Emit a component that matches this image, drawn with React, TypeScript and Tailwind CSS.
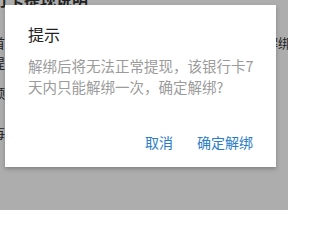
import React from 'react';

const App: React.FC = () => {
  return (
    <div className="relative w-[288px] h-[210px] overflow-hidden bg-white font-['Noto_Sans_CJK_SC',sans-serif] text-[#333]">
      {/* page behind the dialog */}
      <div className="flex flex-col ml-[-8px]">
        <h1 className="mt-[-11px] text-[16px] leading-[20px] font-bold whitespace-nowrap">行卡提现说明</h1>
        <p className="mt-[24px] text-[13px] leading-[20px] whitespace-nowrap">首次提现需先绑定本人银行卡，如需更换请先行解绑</p>
        <p className="mt-[0px] text-[13px] leading-[20px] whitespace-nowrap">提现到账时间为一至三个工作日</p>
        <p className="mt-[10px] text-[13px] leading-[20px] whitespace-nowrap">额度以实际到账为准</p>
        <p className="mt-[20px] text-[13px] leading-[20px] whitespace-nowrap">每日提现次数有限</p>
      </div>

      {/* overlay */}
      <div className="absolute inset-0 bg-black/[0.32] pl-[5px] pt-[5px]">
        <div className="w-[271px] h-[162px] bg-white shadow-[0_2px_4px_rgba(0,0,0,0.25)] flex flex-col px-[23px] pt-[17px]">
          <h2 className="text-[16px] leading-[24px] text-[#222]">提示</h2>
          <p className="mt-[9px] text-[14.5px] leading-[21px] text-[#9b9b9b] whitespace-nowrap">
            解绑后将无法正常提现，该银行卡7
            <br />
            天内只能解绑一次，确定解绑?
          </p>
          <div className="mt-auto mb-[15px] flex justify-end gap-[24px] text-[14px] leading-[20px] text-[#2a7dc6]">
            <button className="leading-[20px]">取消</button>
            <button className="leading-[20px]">确定解绑</button>
          </div>
        </div>
      </div>
    </div>
  );
};

export default App;
